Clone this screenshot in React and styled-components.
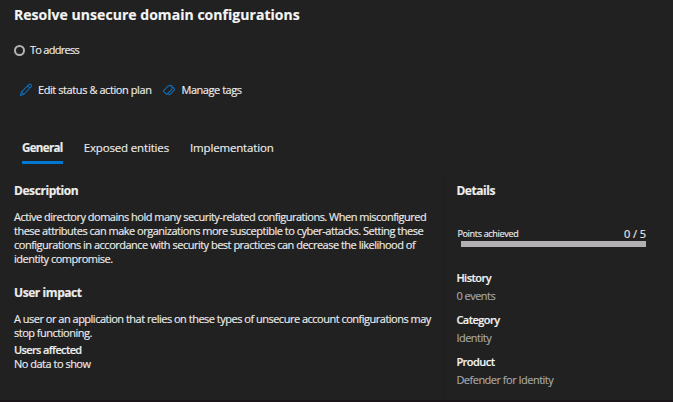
import React from 'react';
import styled, { createGlobalStyle } from 'styled-components';

const Global = createGlobalStyle`
  * { box-sizing: border-box; }
  body {
    margin: 0;
    background: #212121;
    color: #ececec;
    font: 400 11px/14px "Open Sans", "Noto Sans", sans-serif;
    letter-spacing: -0.5px;
    -webkit-text-stroke: 0.15px currentColor;
    overflow: hidden;
  }
  h1, h2, h3, p, dl, dt, dd { margin: 0; }
`;

const Page = styled.main`
  height: 402px;
  display: flex;
  flex-direction: column;
  border-bottom: 2px solid #191519;
  white-space: nowrap;
`;

const Title = styled.h1`
  padding: 5px 0 0 14px;
  font-size: 14px;
  line-height: 20px;
  font-weight: 700;
  letter-spacing: 0.04px;
  color: #f4f4f4;
`;

const Status = styled.div`
  display: flex;
  align-items: center;
  gap: 5px;
  margin-top: 18px;
  padding-left: 14px;
  letter-spacing: -0.72px;
`;

const StatusRing = styled.span`
  width: 11px;
  height: 11px;
  border: 2px solid #b4b4b4;
  border-radius: 50%;
`;

const Toolbar = styled.div`
  display: flex;
  gap: 11px;
  margin-top: 26px;
  padding-left: 19px;
`;

const Command = styled.button`
  display: flex;
  align-items: center;
  gap: 5px;
  padding: 0;
  border: 0;
  background: none;
  color: inherit;
  font: inherit;
  letter-spacing: ${(p) => p.$track}px;
  svg { display: block; fill: none; stroke: #0f6cb4; stroke-width: 1.1; }
`;

const Tabs = styled.nav`
  display: flex;
  gap: 21px;
  margin-top: 43px;
  padding-left: 22px;
`;

const Tab = styled.a`
  height: 24px;
  font-size: 11.5px;
  line-height: 16px;
  font-weight: ${(p) => (p.$active ? 700 : 400)};
  letter-spacing: ${(p) => (p.$active ? -0.63 : -0.16)}px;
  border-bottom: 3px solid ${(p) => (p.$active ? '#0078d4' : 'transparent')};
`;

const Columns = styled.div`
  flex: 1;
  display: grid;
  grid-template-columns: 443px 1fr;
  margin-top: 11px;
`;

const Overview = styled.section`
  padding: 8px 0 0 14px;
`;

const Details = styled.aside`
  border-left: 1px solid #1d1d1d;
  padding: 8px 27px 0 12.4px;
`;

const Heading = styled.h2`
  font-size: 12px;
  line-height: 16px;
  font-weight: 700;
  letter-spacing: -0.43px;
  color: #ededed;
`;

const Paragraph = styled.p`
  margin: 11px 0 ${(p) => p.$after}px;
`;

const Subheading = styled.h3`
  font-size: 11px;
  line-height: 14px;
  font-weight: 600;
  letter-spacing: -0.64px;
`;

const Points = styled.div`
  display: flex;
  justify-content: space-between;
  margin: 28px 0 0 1px;
`;

const PointsLabel = styled.span`
  font-size: 9px;
  letter-spacing: -0.31px;
`;

const PointsValue = styled.span`
  font-weight: 500;
  letter-spacing: -0.06px;
`;

const Meter = styled.div`
  height: 6px;
  margin-left: 4.6px;
  background: #b3b0b3;
`;

const Facts = styled.dl`
  margin-top: 22px;
`;

const Term = styled.dt`
  line-height: 18px;
  font-weight: 600;
  letter-spacing: -0.54px;
  color: #f2f2f2;
`;

const Value = styled.dd`
  line-height: 18px;
  margin-bottom: 6px;
  color: #a8a8a8;
  letter-spacing: -0.51px;
`;

const Pencil = () => (
  <svg width="14" height="14" viewBox="0 0 14 14">
    <path d="M1.5 12.5 2.4 9 10 1.4q.9-.7 1.9.2t.3 2L4.8 11.3ZM8.7 2.8l2.3 2.3M2.4 9l2.4 2.3" />
  </svg>
);

const Tag = () => (
  <svg width="14" height="14" viewBox="0 0 14 14">
    <path d="M1.6 7.6 6 3.2Q6.6 2.6 7.4 2.6H9.2Q10 2.6 10 3.4V5.4Q10 6.2 9.4 6.8L5.2 11Q4.7 11.4 4.2 11L1.6 8.4Q1.2 8 1.6 7.6ZM10 3.4 12.2 5.7Q12.8 6.4 12.2 7.1L8.4 11.1Q7.4 12 6.2 11.2" />
  </svg>
);

const facts = [
  ['History', '0 events'],
  ['Category', 'Identity'],
  ['Product', 'Defender for Identity'],
];

export default function App() {
  return (
    <Page>
      <Global />
      <Title>Resolve unsecure domain configurations</Title>
      <Status><StatusRing />To address</Status>
      <Toolbar>
        <Command $track={-0.42}><Pencil />Edit status &amp; action plan</Command>
        <Command $track={-0.46}><Tag />Manage tags</Command>
      </Toolbar>
      <Tabs>
        <Tab $active>General</Tab>
        <Tab>Exposed entities</Tab>
        <Tab>Implementation</Tab>
      </Tabs>
      <Columns>
        <Overview>
          <Heading>Description</Heading>
          <Paragraph $after={19}>
            Active directory domains hold many security-related configurations. When misconfigured<br />
            these attributes can make organizations more susceptible to cyber-attacks. Setting these<br />
            configurations in accordance with security best practices can decrease the likelihood of<br />
            identity compromise.
          </Paragraph>
          <Heading>User impact</Heading>
          <Paragraph $after={3}>
            A user or an application that relies on these types of unsecure account configurations may<br />
            stop functioning.
          </Paragraph>
          <Subheading>Users affected</Subheading>
          <p>No data to show</p>
        </Overview>
        <Details>
          <Heading>Details</Heading>
          <Points>
            <PointsLabel>Points achieved</PointsLabel>
            <PointsValue>0 / 5</PointsValue>
          </Points>
          <Meter />
          <Facts>
            {facts.map(([term, value]) => (
              <React.Fragment key={term}>
                <Term>{term}</Term>
                <Value>{value}</Value>
              </React.Fragment>
            ))}
          </Facts>
        </Details>
      </Columns>
    </Page>
  );
}
